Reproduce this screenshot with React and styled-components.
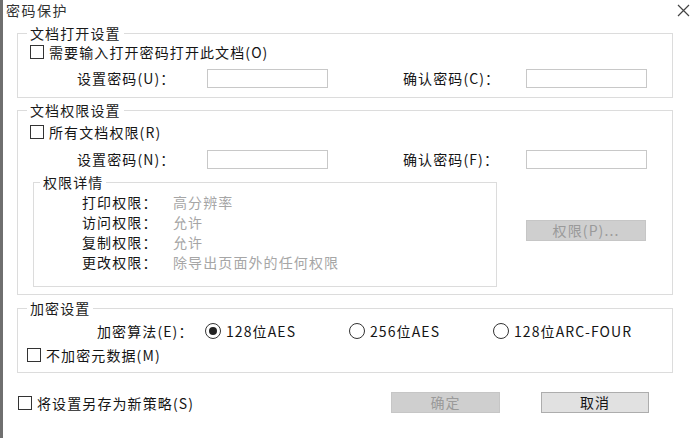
import React from "react";
import styled, { createGlobalStyle } from "styled-components";

const GlobalStyle = createGlobalStyle`
  html, body {
    margin: 0;
    padding: 0;
    background: #ffffff;
  }
  body {
    font-family: "Noto Sans CJK SC", "Noto Sans", "Liberation Sans", sans-serif;
    font-size: 14px;
    color: #151515;
  }
  * {
    box-sizing: border-box;
  }
`;

const Dialog = styled.div`
  width: 700px;
  height: 438px;
  border-left: 3px solid #6f6f6f;
  background: #ffffff;
  display: flex;
  flex-direction: column;
  overflow: hidden;
  letter-spacing: 1.1px;
`;

const TitleBar = styled.div`
  height: 24px;
  display: flex;
  justify-content: space-between;
  align-items: flex-start;
  padding: 0 10px 0 3px;
`;

const Title = styled.div`
  line-height: 20px;
  color: #333333;
  letter-spacing: 1.5px;
`;

const CloseButton = styled.div`
  width: 13px;
  height: 20px;
  display: flex;
  align-items: center;
  justify-content: center;
`;

const Body = styled.div`
  padding: 0 27px 0 14px;
  display: flex;
  flex-direction: column;
`;

const Group = styled.fieldset`
  margin: ${(p) => p.$top || 0}px 0 0 0;
  padding: ${(p) => p.$padTop || 0}px 0 ${(p) => p.$padBottom || 0}px 0;
  min-width: 0;
  border: 1px solid #dcdcdc;
  display: flex;
  flex-direction: column;
`;

const Legend = styled.legend`
  margin-left: ${(p) => p.$offset || 9}px;
  padding: 0 3px;
  line-height: 18px;
  color: #1a1a1a;
`;

const Row = styled.div`
  height: 20px;
  display: flex;
  align-items: center;
  margin-top: ${(p) => p.$top || 0}px;
  padding-left: ${(p) => p.$indent || 0}px;
  white-space: nowrap;
`;

const CheckLabel = styled.label`
  display: flex;
  align-items: center;
  line-height: 20px;
`;

const CheckBox = styled.span`
  display: block;
  width: 14px;
  height: 14px;
  border: 1.3px solid #333333;
  margin-right: 5px;
  flex: none;
`;

const FieldLabel = styled.span`
  width: ${(p) => p.$width}px;
  margin-left: ${(p) => p.$left || 0}px;
  flex: none;
`;

const Input = styled.input`
  width: 121px;
  height: 19px;
  border: 1px solid #c8c8c8;
  background: #ffffff;
  padding: 0 3px;
  flex: none;
  outline: none;
`;

const DetailArea = styled.div`
  display: flex;
  align-items: center;
  margin-top: 4px;
  padding-left: 15px;
`;

const DetailGroup = styled.fieldset`
  width: 464px;
  margin: 0;
  padding: 1px 0 14px 0;
  min-width: 0;
  border: 1px solid #dcdcdc;
`;

const DetailRow = styled.div`
  height: 20px;
  display: flex;
  align-items: center;
  padding-left: 48px;
`;

const DetailKey = styled.span`
  width: 91px;
  flex: none;
`;

const DetailValue = styled.span`
  color: #a6a6a6;
`;

const Button = styled.button`
  width: ${(p) => p.$width || 110}px;
  height: 21px;
  margin-left: ${(p) => p.$left || 0}px;
  padding: 0;
  font-family: inherit;
  font-size: 14px;
  letter-spacing: 1.1px;
  line-height: 19px;
  border: 1px solid ${(p) => (p.$disabled ? "#c6c6c6" : "#adadad")};
  background: ${(p) => (p.$disabled ? "#cfcfcf" : "#e1e1e1")};
  color: ${(p) => (p.$disabled ? "#9a9a9a" : "#151515")};
  flex: none;
`;

const RadioItem = styled.label`
  width: 144px;
  display: flex;
  align-items: center;
  flex: none;
`;

const RadioCircle = styled.span`
  width: 16px;
  height: 16px;
  border-radius: 50%;
  border: 1.2px solid #333333;
  margin-right: 5px;
  display: flex;
  align-items: center;
  justify-content: center;
  flex: none;

  &::after {
    content: "";
    width: 8px;
    height: 8px;
    border-radius: 50%;
    background: ${(p) => (p.$checked ? "#222222" : "transparent")};
  }
`;

const Footer = styled.div`
  display: flex;
  align-items: center;
  height: 21px;
  margin-top: 19px;
  padding: 0 24px 0 1px;
  white-space: nowrap;
`;

const Spacer = styled.div`
  flex: 1;
`;

function Check({ children }) {
  return (
    <CheckLabel>
      <CheckBox />
      {children}
    </CheckLabel>
  );
}

function Radio({ checked, children }) {
  return (
    <RadioItem>
      <RadioCircle $checked={checked} />
      {children}
    </RadioItem>
  );
}

function PasswordRow({ top, first, second }) {
  return (
    <Row $top={top} $indent={59}>
      <FieldLabel $width={130}>{first}</FieldLabel>
      <Input type="password" />
      <FieldLabel $width={123} $left={75}>
        {second}
      </FieldLabel>
      <Input type="password" />
    </Row>
  );
}

const details = [
  ["打印权限：", "高分辨率"],
  ["访问权限：", "允许"],
  ["复制权限：", "允许"],
  ["更改权限：", "除导出页面外的任何权限"],
];

export default function App() {
  return (
    <>
      <GlobalStyle />
      <Dialog>
        <TitleBar>
          <Title>密码保护</Title>
          <CloseButton>
            <svg width="13" height="13" viewBox="0 0 13 13">
              <path d="M1 1 L12 12 M12 1 L1 12" stroke="#444" strokeWidth="1.2" fill="none" />
            </svg>
          </CloseButton>
        </TitleBar>
        <Body>
          <Group $padBottom={9}>
            <Legend>文档打开设置</Legend>
            <Row $indent={12}>
              <Check>需要输入打开密码打开此文档(O)</Check>
            </Row>
            <PasswordRow top={6} first="设置密码(U)：" second="确认密码(C)：" />
          </Group>

          <Group $top={3} $padTop={3} $padBottom={7}>
            <Legend>文档权限设置</Legend>
            <Row $indent={12}>
              <Check>所有文档权限(R)</Check>
            </Row>
            <PasswordRow top={7} first="设置密码(N)：" second="确认密码(F)：" />
            <DetailArea>
              <DetailGroup>
                <Legend $offset={6}>权限详情</Legend>
                {details.map(([k, v]) => (
                  <DetailRow key={k}>
                    <DetailKey>{k}</DetailKey>
                    <DetailValue>{v}</DetailValue>
                  </DetailRow>
                ))}
              </DetailGroup>
              <Button $disabled $width={120} $left={29}>
                权限(P)...
              </Button>
            </DetailArea>
          </Group>

          <Group $top={4} $padTop={4} $padBottom={7}>
            <Legend>加密设置</Legend>
            <Row $indent={79}>
              <FieldLabel $width={108}>加密算法(E)：</FieldLabel>
              <Radio checked>128位AES</Radio>
              <Radio>256位AES</Radio>
              <Radio>128位ARC-FOUR</Radio>
            </Row>
            <Row $top={4} $indent={9}>
              <Check>不加密元数据(M)</Check>
            </Row>
          </Group>

          <Footer>
            <Check>将设置另存为新策略(S)</Check>
            <Spacer />
            <Button $disabled $width={109}>
              确定
            </Button>
            <Button $width={108} $left={41}>
              取消
            </Button>
          </Footer>
        </Body>
      </Dialog>
    </>
  );
}
